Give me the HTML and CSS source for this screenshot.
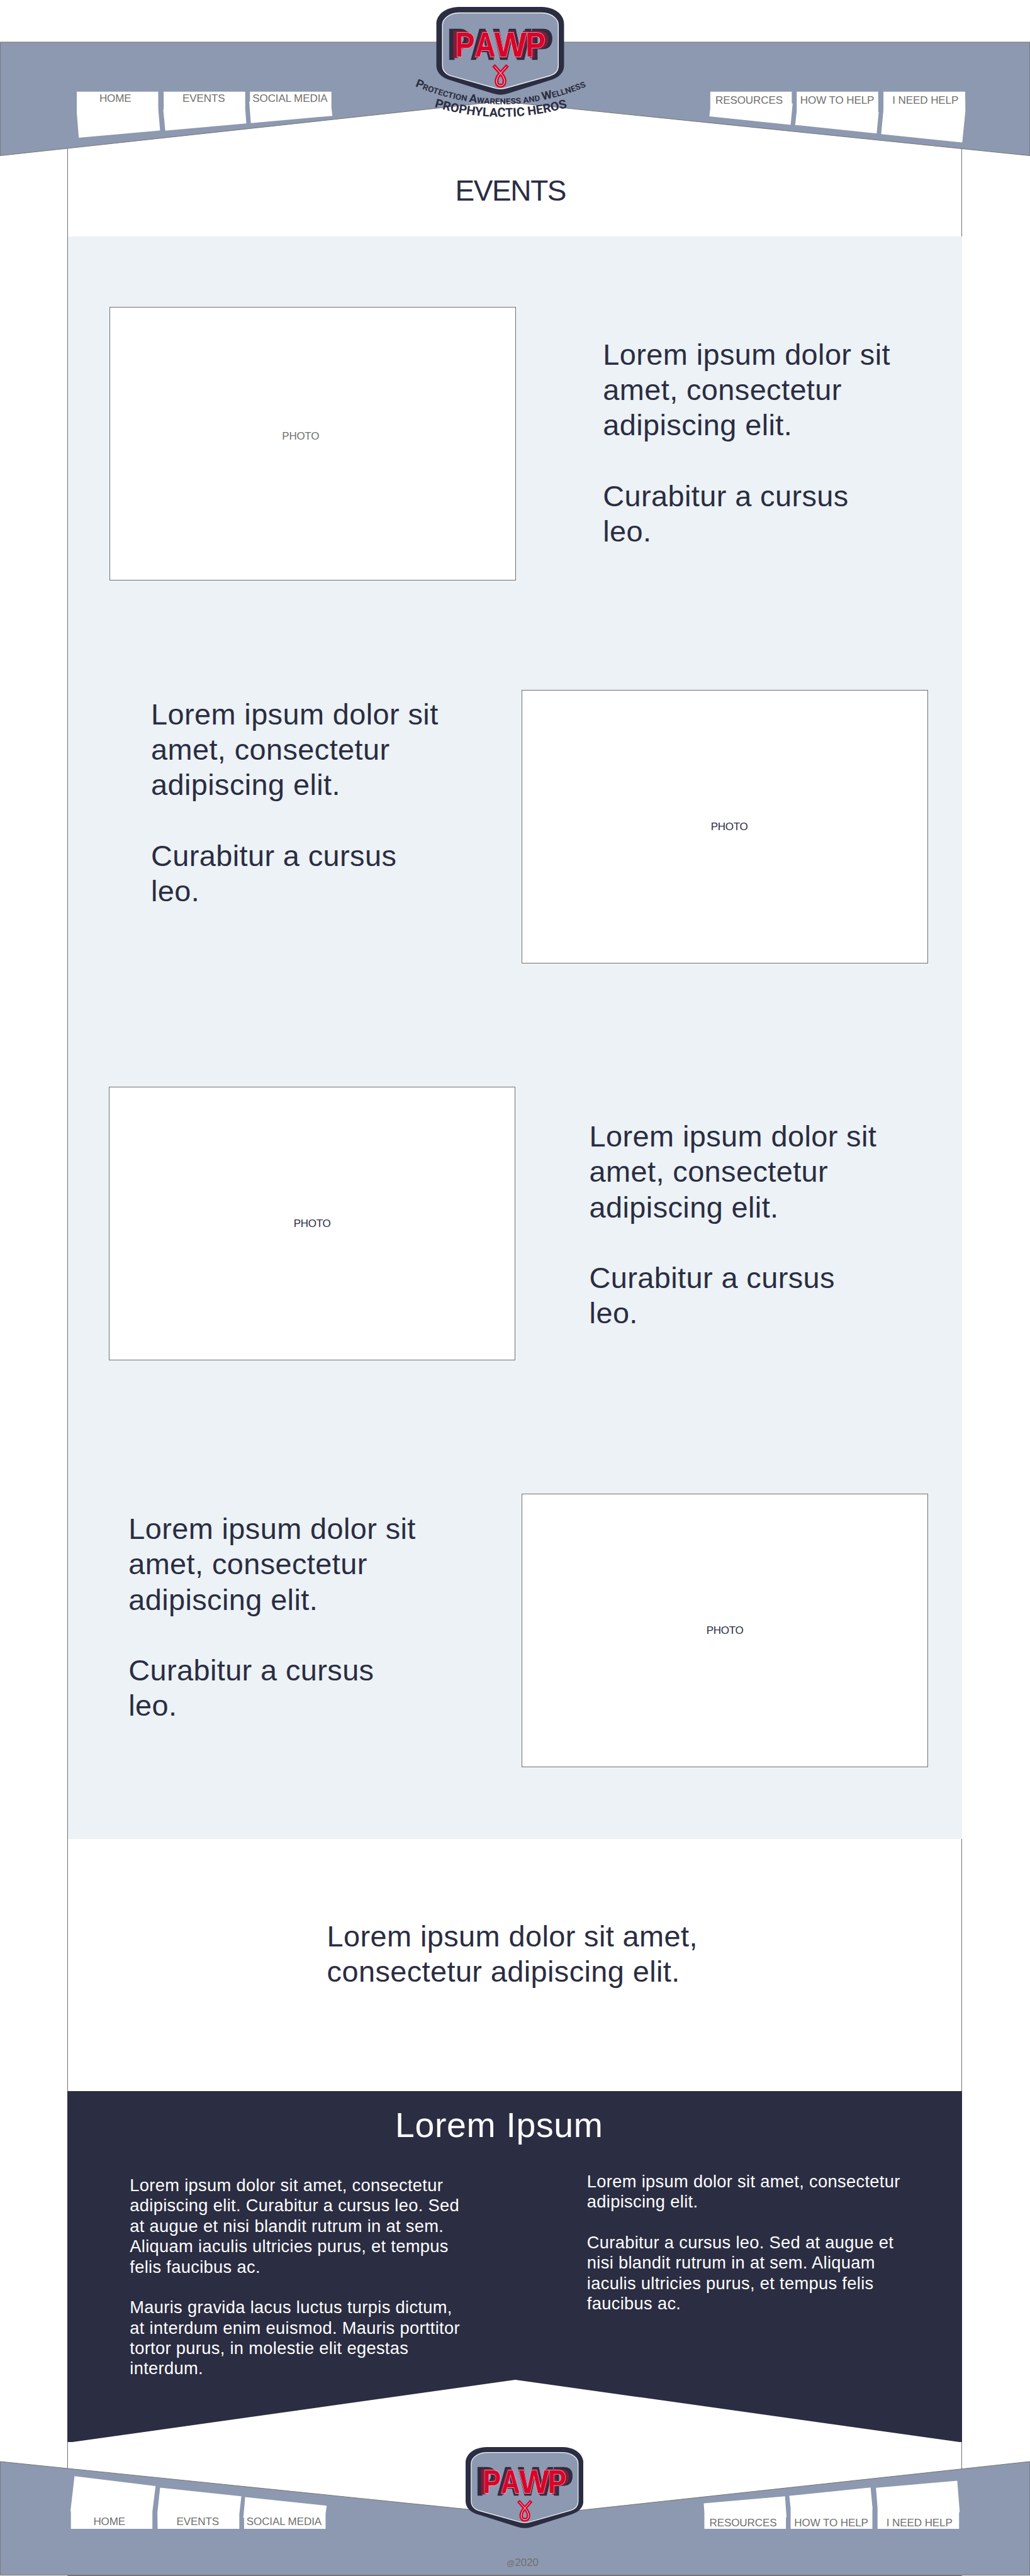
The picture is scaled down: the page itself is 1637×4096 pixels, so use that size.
FILE: index.html
```html
<!DOCTYPE html>
<html lang="en">
<head>
<meta charset="utf-8">
<title>PAWP Events</title>
<link rel="stylesheet" href="styles.css">
</head>
<body>
<div class="page">
  <header class="site-header">
    <svg class="banner banner-top" viewBox="0 0 1920 292" preserveAspectRatio="none" aria-hidden="true">
      <polygon class="banner-fill" points="0.5,78.5 1919.5,78.5 1919.5,290.3 932,189 0.5,290.3"/>
      <g class="tab-shape">
        <polygon points="143.1,171 295,171 295,203 298.4,243.3 146.9,256.7 143.1,210"/>
        <polygon points="305.1,171 457.1,171 457.1,203 459.2,230 308.1,243.7 304.3,204 305.1,204"/>
        <polygon points="465.9,171 617.8,171 617.8,200 619.5,216 467.6,229.5 464.6,189.7 465.9,189.7"/>
        <polygon points="1324,171 1475.9,171 1475.9,193 1477.6,193 1473.8,232.7 1322.3,217 1324,203"/>
        <polygon points="1485.2,171 1637.1,171 1637.1,209 1638,209 1634.2,249 1482.2,233 1485.2,207"/>
        <polygon points="1646.8,171 1799.1,171 1799.6,207 1793.7,265.7 1642.6,250 1646.8,205"/>
      </g>
    </svg>
    <nav class="nav">
      <div class="nav-group">
        <a>HOME</a><a>EVENTS</a><a>SOCIAL MEDIA</a>
      </div>
      <div class="nav-group nav-right">
        <a>RESOURCES</a><a>HOW TO HELP</a><a>I NEED HELP</a>
      </div>
    </nav>
    <svg class="logo" viewBox="0 0 1140 720">
      <defs>
        <g id="word">
          <text transform="translate(325 317) scale(.835 1)">P</text>
          <text transform="translate(435 317) scale(.82 1)">A</text>
          <text transform="translate(544 317) scale(.98 1)">W</text>
          <text transform="translate(719 317) scale(.85 1)">P</text>
        </g>
        <g id="badge">
          <path class="navy" d="M345 39H810C885 41 934 82 934 135V368C934 405 905 434 865 446L622 523Q578 538 535 523L290 446C250 434 220 405 220 368V135C220 82 270 41 345 39Z"/>
          <path class="shield" d="M345 72H810C870 74 902 108 902 140V368C902 398 885 414 858 423L612 492Q578 502 545 492L296 423C268 412 254 395 254 368V140C254 106 290 74 345 72Z"/>
          <g class="word">
            <use href="#word" class="word-back" transform="translate(581 250) scale(1.177 1.26) translate(-581 -250)"/>
            <use href="#word" class="word-mid" transform="translate(581 250) scale(1.086 1.126) translate(-581 -250)"/>
            <use href="#word" class="word-front"/>
          </g>
          <path class="ribbon" d="M540 366L588 420C610 450 603 480 579 480C555 480 548 450 570 420L618 366"/>
          <path class="ribbon-line" d="M546 372L588 420C610 450 603 480 579 480C555 480 548 450 570 420L612 372"/>
        </g>
        <path id="arc1" d="M100 482Q580 682 1052 487"/>
        <path id="arc2" d="M208 598Q580 709 956 600"/>
      </defs>
      <use href="#badge"/>
      <text class="motto"><textPath href="#arc1" textLength="985" lengthAdjust="spacingAndGlyphs"><tspan class="cap">P</tspan>ROTECTION <tspan class="cap">A</tspan>WARENESS AND <tspan class="cap">W</tspan>ELLNESS</textPath></text>
      <text class="heroes"><textPath href="#arc2" textLength="755" lengthAdjust="spacingAndGlyphs">PROPHYLACTIC HEROS</textPath></text>
    </svg>
  </header>

  <main class="frame">
    <h1 class="title">EVENTS</h1>
    <section class="events">
      <article class="event event-1">
        <div class="photo"><span>PHOTO</span></div>
        <p class="copy">Lorem ipsum dolor sit<br>amet, consectetur<br>adipiscing elit.<br><br>Curabitur a cursus<br>leo.</p>
      </article>
      <article class="event event-2">
        <p class="copy">Lorem ipsum dolor sit<br>amet, consectetur<br>adipiscing elit.<br><br>Curabitur a cursus<br>leo.</p>
        <div class="photo"><span>PHOTO</span></div>
      </article>
      <article class="event event-3">
        <div class="photo"><span>PHOTO</span></div>
        <p class="copy">Lorem ipsum dolor sit<br>amet, consectetur<br>adipiscing elit.<br><br>Curabitur a cursus<br>leo.</p>
      </article>
      <article class="event event-4">
        <p class="copy">Lorem ipsum dolor sit<br>amet, consectetur<br>adipiscing elit.<br><br>Curabitur a cursus<br>leo.</p>
        <div class="photo"><span>PHOTO</span></div>
      </article>
    </section>
    <section class="statement">
      <p class="copy">Lorem ipsum dolor sit amet,<br>consectetur adipiscing elit.</p>
    </section>
    <section class="about">
      <h2>Lorem Ipsum</h2>
      <div class="columns">
        <p>Lorem ipsum dolor sit amet, consectetur<br>adipiscing elit. Curabitur a cursus leo. Sed<br>at augue et nisi blandit rutrum in at sem.<br>Aliquam iaculis ultricies purus, et tempus<br>felis faucibus ac.<br><br>Mauris gravida lacus luctus turpis dictum,<br>at interdum enim euismod. Mauris porttitor<br>tortor purus, in molestie elit egestas<br>interdum.</p>
        <p class="second">Lorem ipsum dolor sit amet, consectetur<br>adipiscing elit.<br><br>Curabitur a cursus leo. Sed at augue et<br>nisi blandit rutrum in at sem. Aliquam<br>iaculis ultricies purus, et tempus felis<br>faucibus ac.</p>
      </div>
    </section>
  </main>

  <footer class="site-footer">
    <svg class="banner banner-bottom" viewBox="0 4585 1920 218" preserveAspectRatio="none" aria-hidden="true">
      <rect class="base-line" x="126" y="4801" width="1667" height="2"/>
      <polygon class="banner-fill" points="0.5,4589.7 988,4690.6 1919.5,4589.7 1919.5,4801.5 0.5,4801.5"/>
      <g class="tab-shape">
        <polygon points="138.9,4617 290,4635.3 284.1,4683 284.1,4715 132.2,4715 132.2,4682.7 131.3,4682.7"/>
        <polygon points="298.4,4638.3 449.9,4654.3 446.1,4688 446.1,4715 293.8,4715 293.4,4684.7"/>
        <polygon points="457,4656 609,4672 606.9,4687 606.9,4715 455,4715 455,4694.7 453.6,4694.7"/>
        <polygon points="1311.8,4667.7 1463.3,4654.3 1466.2,4694 1465,4694 1465,4715 1313,4715 1313,4684"/>
        <polygon points="1471.3,4653.7 1622.8,4638 1626.6,4678 1626.2,4678 1626.2,4715 1473.8,4715 1473.8,4677"/>
        <polygon points="1632.9,4638.7 1784.4,4625.3 1789,4684 1787.8,4684 1787.8,4715 1635.8,4715 1635.8,4676"/>
      </g>
    </svg>
    <nav class="nav nav-foot">
      <div class="nav-group">
        <a>HOME</a><a>EVENTS</a><a>SOCIAL MEDIA</a>
      </div>
      <div class="nav-group nav-right">
        <a>RESOURCES</a><a>HOW TO HELP</a><a>I NEED HELP</a>
      </div>
    </nav>
    <p class="copyright"><span class="at">@</span>2020</p>
    <svg class="logo-foot" viewBox="220 39 714 492"><use href="#badge"/></svg>
  </footer>
</div>
</body>
</html>
```
FILE: styles.css
```css
* { box-sizing: border-box; }

body {
  margin: 0;
  background: #fff;
  color: #2b2d42;
  font-family: "Liberation Sans", Arial, Helvetica, sans-serif;
}

h1, h2, p { margin: 0; font-weight: 400; }

.page {
  position: relative;
  width: 1637px;
  height: 4096px;
  overflow: hidden;
}

/* Header and footer banners */
.site-header {
  position: relative;
  z-index: 1;
  height: 204px;
  padding-top: 147px;
}

.banner { position: absolute; left: 0; width: 1637px; }
.banner-top { top: 0; height: 249px; }
.banner-bottom { bottom: 0; height: 186px; }
.banner-fill { fill: #8d99b0; stroke: #707070; stroke-width: 1.1; }
.base-line { fill: #707070; }
.tab-shape { fill: #fff; }

.nav {
  position: relative;
  display: flex;
  padding-left: 119.3px;
}

.nav-group {
  display: flex;
  gap: 12.7px;
  width: 407px;
  height: 22px;
  font-size: 17.05px;
  line-height: 20px;
  letter-spacing: -0.1px;
  color: #707070;
  white-space: nowrap;
}

.nav-group a { flex: 0 0 127.9px; text-align: center; }
.nav-group:not(.nav-right) a:last-child { margin-left: -3.5px; }
.nav-right { margin-left: 600.2px; gap: 12.3px; padding-top: 3.4px; }
.nav-foot { padding-left: 109.8px; }
.nav-foot .nav-right { padding-top: 2px; }

/* Logo */
.logo {
  position: absolute;
  left: 631px;
  top: 0;
  width: 324px;
  height: 204.6px;
  overflow: visible;
}

.logo-foot {
  position: absolute;
  left: 739.5px;
  top: -38.6px;
  width: 187.2px;
  height: 129px;
}

.navy { fill: #2b2d42; }
.shield { fill: #8d99b0; stroke: #edf2f4; stroke-width: 5; }
.word { font: 700 196px "Liberation Sans", Arial, sans-serif; paint-order: stroke; }
.word-back { fill: #2b2d42; stroke: #2b2d42; stroke-width: 2; }
.word-mid { fill: #861a37; stroke: #861a37; stroke-width: 2; }
.word-front { fill: #d90429; stroke: #e3b4c0; stroke-width: 5; }
.ribbon { fill: none; stroke: #d90429; stroke-width: 21; }
.ribbon-line { fill: none; stroke: #edf2f4; stroke-width: 3.5; }
.motto { font: 700 45px Roboto, sans-serif; fill: #2b2d42; }
.motto .cap { font-size: 63px; }
.heroes { font: 700 68px Roboto, sans-serif; fill: #2b2d42; }

/* Framed content column */
.frame {
  width: 1422px;
  height: 3726px;
  margin-left: 107px;
  border: solid #707070;
  border-width: 0 1px;
}

.title {
  height: 172px;
  padding: 71.6px 0 0 615.5px;
  font-size: 46px;
  line-height: 54px;
  letter-spacing: -1.4px;
}

.events {
  height: 2548px;
  margin-right: -1px;
  padding-top: 112px;
  background: #ecf2f5;
}

.event { display: flex; align-items: flex-start; height: 435px; }
.event-1 { margin-bottom: 174px; padding-left: 66px; }
.event-2 { margin-bottom: 196px; padding: 0 54px 0 132px; }
.event-3 { margin-bottom: 212px; padding-left: 65px; }
.event-4 { padding: 0 54px 0 96.2px; }

.photo {
  display: flex;
  flex: 0 0 646px;
  align-items: center;
  justify-content: center;
  height: 435px;
  border: 1px solid #707070;
  background: #fff;
  font-size: 17.05px;
  line-height: 20px;
  letter-spacing: -0.3px;
}

.event-2 .photo, .event-4 .photo { margin-left: auto; }
.event-1 .photo { padding: 0 38.6px 22.4px 0; color: #707070; }
.event-2 .photo { padding-left: 14px; }

.copy {
  font-size: 46.9px;
  line-height: 56.28px;
  letter-spacing: 0.0085em;
  white-space: nowrap;
}

.event-1 .copy { margin: 47.5px 0 0 138.3px; }
.event-2 .copy { margin-top: 10.6px; }
.event-3 .copy { margin: 51px 0 0 117.6px; }
.event-4 .copy { margin-top: 28px; }

.statement { height: 401px; padding: 127px 0 0 411.6px; }

.about {
  height: 558px;
  margin: 0 -1px;
  padding-top: 20.5px;
  background: #2b2d42;
  color: #fff;
  clip-path: polygon(0 0, 1422px 0, 1422px 558px, 1418px 558px, 712px 459px, 8px 558px, 0 558px);
  white-space: nowrap;
}

.about h2 {
  padding-left: 521px;
  font-size: 55.4px;
  line-height: 66px;
  letter-spacing: 0.012em;
}

.columns {
  display: flex;
  padding: 41.2px 0 0 99.3px;
  font-size: 27.28px;
  line-height: 32.38px;
  letter-spacing: 0.33px;
}

.columns p:first-child { width: 726.5px; padding-top: 6.4px; }

.site-footer {
  position: relative;
  z-index: 1;
  height: 166px;
  padding-top: 70px;
}

.copyright {
  position: relative;
  margin-top: 42.8px;
  padding-left: 805px;
  font-size: 16.9px;
  line-height: 20px;
  color: #707070;
}

.at { font-size: 13.2px; }
```
